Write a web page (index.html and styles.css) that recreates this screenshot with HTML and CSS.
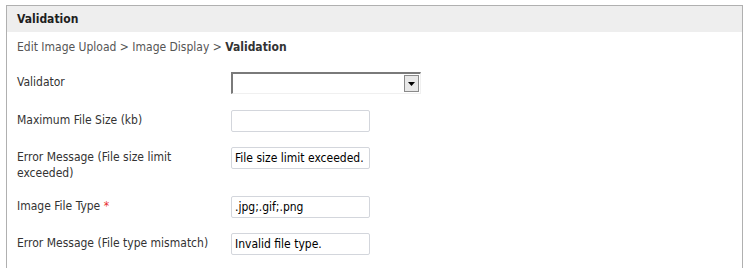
FILE: index.html
```html
<!DOCTYPE html>
<html>
<head>
<meta charset="utf-8">
<link rel="stylesheet" href="styles.css">
</head>
<body>
<div class="panel">
  <div class="panel-head">Validation</div>
  <div class="panel-body">
    <div class="crumbs">Edit Image Upload &gt; Image Display &gt; <b>Validation</b></div>
    <div class="form">
      <div class="row">
        <label class="lbl">Validator</label>
        <div class="select"><span class="select-btn"><svg width="7" height="4" viewBox="0 0 7 4"><path d="M0 0h7L3.5 4z" fill="#000"/></svg></span></div>
      </div>
      <div class="row">
        <label class="lbl">Maximum File Size (kb)</label>
        <div class="input"></div>
      </div>
      <div class="row">
        <label class="lbl">Error Message (File size limit exceeded)</label>
        <div class="input">File size limit exceeded.</div>
      </div>
      <div class="row">
        <label class="lbl">Image File Type <span class="req">*</span></label>
        <div class="input">.jpg;.gif;.png</div>
      </div>
      <div class="row">
        <label class="lbl">Error Message (File type mismatch)</label>
        <div class="input">Invalid file type.</div>
      </div>
    </div>
  </div>
</div>
</body>
</html>
```
FILE: styles.css
```css
html, body {
  margin: 0;
  padding: 0;
  background: #fff;
}
body {
  font-family: "DejaVu Sans Condensed", "DejaVu Sans", Verdana, sans-serif;
  font-size: 12px;
  color: #333;
  padding: 5px 0 0 6px;
}
.panel {
  width: 735px;
  border: 1px solid #b0b0b0;
  border-bottom: none;
  height: 300px;
}
.panel-head {
  background: #eeeeee;
  height: 26px;
  line-height: 26px;
  padding-left: 10px;
  font-weight: bold;
  color: #1e1e1e;
}
.panel-body {
  padding: 0 10px;
}
.crumbs {
  color: #555;
  height: 30px;
  line-height: 30px;
}
.crumbs b {
  color: #333;
}
.form {
  display: flex;
  flex-direction: column;
  gap: 15px;
  padding-top: 10px;
}
.row {
  display: grid;
  grid-template-columns: 214px 1fr;
  align-items: start;
}
.lbl {
  line-height: 16px;
  padding-top: 2px;
  width: 195px;
}
.req {
  color: #e83030;
}
.input {
  width: 134px;
  height: 20px;
  border: 1px solid #d3d6dc;
  border-radius: 2px;
  line-height: 21px;
  padding-left: 3px;
  color: #000;
  white-space: nowrap;
  overflow: hidden;
}
.select {
  width: 187px;
  height: 19px;
  border-style: solid;
  border-color: #7a7a7a #f0f0f0 #f0f0f0 #7a7a7a;
  border-width: 2px 1px 1px 2px;
  display: flex;
  justify-content: flex-end;
  align-items: center;
  margin-bottom: 1px;
}
.select-btn {
  width: 13px;
  height: 15px;
  border: 1px solid #8a8a8a;
  background: #e8e8e8;
  margin-right: 1px;
  display: flex;
  align-items: center;
  justify-content: center;
}
```
